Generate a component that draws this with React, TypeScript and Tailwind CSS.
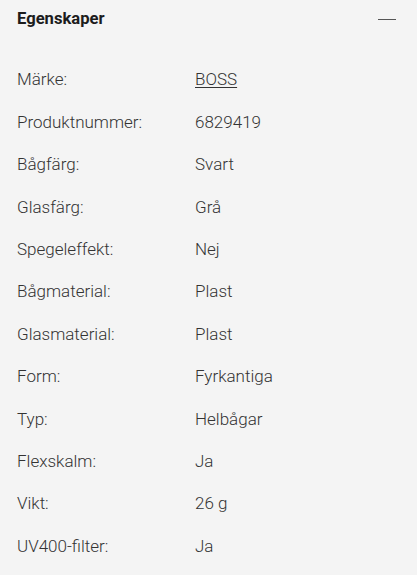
import React from "react";

const rows: [string, string][] = [
  ["Märke:", "BOSS"],
  ["Produktnummer:", "6829419"],
  ["Bågfärg:", "Svart"],
  ["Glasfärg:", "Grå"],
  ["Spegeleffekt:", "Nej"],
  ["Bågmaterial:", "Plast"],
  ["Glasmaterial:", "Plast"],
  ["Form:", "Fyrkantiga"],
  ["Typ:", "Helbågar"],
  ["Flexskalm:", "Ja"],
  ["Vikt:", "26 g"],
  ["UV400-filter:", "Ja"],
];

export default function App() {
  return (
    <div
      className="w-[417px] h-[575px] bg-[#f4f4f4] overflow-hidden"
      style={{ fontFamily: "Roboto, 'Liberation Sans', sans-serif" }}
    >
      <div className="flex items-center justify-between h-[38px] pl-[17px] pr-[21px]">
        <span className="text-[16.6px] font-bold text-[#1c1c1c]">Egenskaper</span>
        <span className="block w-[18px] h-[1px] bg-[#555]" />
      </div>
      <div className="pt-[21px] px-[17px]">
        {rows.map(([k, v]) => (
          <div key={k} className="flex items-center h-[42.4px] text-[17px] text-[#333] font-light">
            <span className="w-[178px]">{k}</span>
            {k === "Märke:" ? (
              <span className="underline underline-offset-2">{v}</span>
            ) : (
              <span>{v}</span>
            )}
          </div>
        ))}
      </div>
    </div>
  );
}
